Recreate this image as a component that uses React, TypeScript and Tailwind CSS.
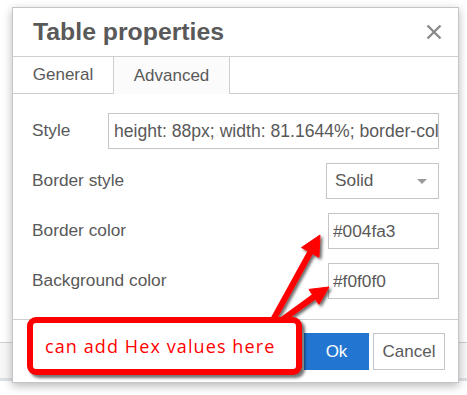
import React from 'react';

const rows = [
  { label: 'Border color', value: '#004fa3' },
  { label: 'Background color', value: '#f0f0f0' },
];

export default function App() {
  return (
    <div className="relative w-[467px] h-[395px] overflow-hidden bg-white font-['Liberation_Sans',Arial,sans-serif] text-[#595959]">

      {/* Editor behind the modal */}
      <div className="h-[342px]" />
      <div className="h-[36px] border-t border-[#cfcfcf] bg-[#f7f7f7]" />
      <div className="h-[3px] bg-[#dde1e6]" />

      {/* Dialog */}
      <div className="absolute left-[12px] top-[7px] w-[447px] h-[376px] flex flex-col border border-[#c5c5c5] bg-white shadow-[0_3px_9px_rgba(0,0,0,0.28)]">

        {/* Header */}
        <div className="h-[49px] shrink-0 flex items-center justify-between border-b border-[#cfcfcf] pl-[20px] pr-[16px]">
          <h1 className="text-[24.8px] font-bold leading-none">Table properties</h1>
          <svg width="16" height="16" viewBox="0 0 16 16" className="text-[#8a8a8a]">
            <path d="M1.5 1.5 L14.5 14.5 M14.5 1.5 L1.5 14.5" stroke="currentColor" strokeWidth="2.4" />
          </svg>
        </div>

        {/* Tabs */}
        <div className="h-[37px] shrink-0 flex border-b border-[#cfcfcf] text-[17px]">
          <div className="w-[101px] flex items-center justify-center border-r border-[#cfcfcf]">
            General
          </div>
          <div className="w-[116px] -mb-px flex items-center justify-center border-r border-[#cfcfcf] bg-[#fbfbfb]">
            Advanced
          </div>
        </div>

        {/* Body */}
        <div className="flex-1 flex flex-col gap-[14px] pt-[19px] pl-[19px] pr-[19px] text-[17.3px]">
          <div className="h-[36px] flex items-center">
            <span className="w-[76px] shrink-0">Style</span>
            <input
              readOnly
              defaultValue="height: 88px; width: 81.1644%; border-collapse: collapse;"
              className="h-[36px] min-w-0 flex-1 border border-[#c5c5c5] pl-[5px] text-[17.6px] text-[#595959] outline-none"
            />
          </div>

          <div className="h-[36px] flex items-center justify-between">
            <span>Border style</span>
            <div className="w-[113px] h-[36px] flex items-center justify-between border border-[#c5c5c5] pl-[8px] pr-[11px]">
              <span>Solid</span>
              <svg width="10" height="5" viewBox="0 0 10 5">
                <path d="M0 0 H10 L5 5 Z" fill="#9a9a9a" />
              </svg>
            </div>
          </div>

          {rows.map((row) => (
            <div key={row.label} className="h-[36px] flex items-center justify-between">
              <span>{row.label}</span>
              <input
                readOnly
                defaultValue={row.value}
                className="w-[111px] h-[36px] border border-[#c5c5c5] pl-[4px] text-[17.3px] text-[#595959] outline-none"
              />
            </div>
          ))}
        </div>

        {/* Footer */}
        <div className="h-[63px] shrink-0 flex items-start justify-end gap-[4px] border-t border-[#cfcfcf] pt-[13px] pr-[13px] text-[17px]">
          <button className="w-[65px] h-[37px] bg-[#2276d2] text-white">Ok</button>
          <button className="w-[72px] h-[37px] border border-[#c5c5c5] bg-white text-[#595959]">Cancel</button>
        </div>
      </div>

      {/* Annotation arrows */}
      <svg className="absolute inset-0 pointer-events-none" width="467" height="395" viewBox="0 0 467 395">
        <defs>
          <filter id="shadow" x="-20%" y="-20%" width="140%" height="140%">
            <feDropShadow dx="2" dy="2" stdDeviation="1.4" floodColor="#000" floodOpacity="0.6" />
          </filter>
        </defs>
        <g filter="url(#shadow)" fill="#ff0000" stroke="#ff0000">
          <line x1="273" y1="320" x2="311" y2="251" strokeWidth="6" strokeLinecap="round" />
          <polygon points="320,235 318.9,257.3 301.5,247.5" strokeWidth="1" strokeLinejoin="round" />
          <line x1="282" y1="320" x2="315" y2="296" strokeWidth="6" strokeLinecap="round" />
          <polygon points="329,287 318.9,304.4 309,289.4" strokeWidth="1" strokeLinejoin="round" />
        </g>
      </svg>

      {/* Annotation callout */}
      <div className="absolute left-[27px] top-[317px] w-[275px] h-[58px] flex items-center rounded-[9px] border-[6px] border-[#ff0000] bg-white pl-[12px] shadow-[3px_3px_3px_rgba(0,0,0,0.55)]">
        <span className="font-['Open_Sans',sans-serif] text-[18px] tracking-[1.1px] text-[#ff0000] leading-none">
          can add Hex values here
        </span>
      </div>
    </div>
  );
}
